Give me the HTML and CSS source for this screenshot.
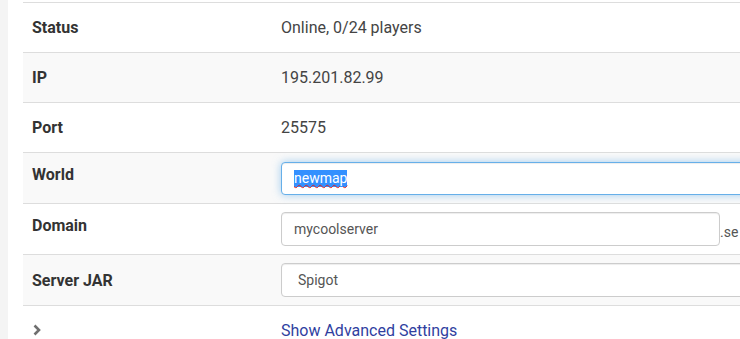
FILE: index.html
```html
<!DOCTYPE html>
<html>
<head>
<meta charset="utf-8">
<link rel="stylesheet" href="styles.css">
</head>
<body>
<div class="page">
  <div class="sidebar"></div>
  <div class="content">
    <div class="table">
      <div class="row plain">
        <div class="label">Status</div>
        <div class="value">Online, 0/24 players</div>
      </div>
      <div class="row plain striped">
        <div class="label">IP</div>
        <div class="value">195.201.82.99</div>
      </div>
      <div class="row plain">
        <div class="label">Port</div>
        <div class="value">25575</div>
      </div>
      <div class="row field striped">
        <div class="label top">World</div>
        <div class="value">
          <div class="input focused wide"><span class="sel">newmap</span></div>
        </div>
      </div>
      <div class="row field">
        <div class="label top">Domain</div>
        <div class="value">
          <div class="input domain">mycoolserver</div><span class="suffix">.se</span>
        </div>
      </div>
      <div class="row field striped">
        <div class="label">Server JAR</div>
        <div class="value">
          <div class="input select wide">Spigot</div>
        </div>
      </div>
      <div class="row advanced">
        <div class="label">
          <svg class="chev" width="10" height="12" viewBox="0 0 10 12"><polyline points="2.5,1.5 7,6 2.5,10.5" fill="none" stroke="#6f6f6f" stroke-width="2.6"/></svg>
        </div>
        <div class="value"><a class="link" href="#">Show Advanced Settings</a></div>
      </div>
    </div>
  </div>
</div>
</body>
</html>
```
FILE: styles.css
```css
html, body {
  margin: 0;
  padding: 0;
  background: #fff;
  overflow: hidden;
}
body {
  font-family: Roboto, "Liberation Sans", sans-serif;
  font-size: 16px;
  color: #333;
  width: 740px;
  height: 339px;
}
.page {
  display: flex;
  height: 339px;
}
.sidebar {
  width: 8px;
  flex: none;
  background: #f4f4f4;
}
.content {
  flex: none;
  padding: 2px 0 0 15px;
  width: 800px;
}
.table {
  width: 800px;
  border-top: 1px solid #ddd;
}
.row {
  display: flex;
  align-items: center;
  border-bottom: 1px solid #ddd;
  box-sizing: border-box;
}
.row.plain { height: 50px; }
.row.field { height: 51px; }
.row.striped { background: #f9f9f9; }
.row.advanced { border-bottom: none; height: 46px; padding-top: 2px; }
.label {
  width: 249px;
  padding-left: 9px;
  box-sizing: border-box;
  font-weight: bold;
  color: #333;
  flex: none;
}
.label.top {
  align-self: flex-start;
  padding-top: 12px;
}
.value {
  padding-left: 9px;
  color: #444;
  display: flex;
  align-items: center;
  flex: 1;
  white-space: nowrap;
}
.input {
  height: 34px;
  box-sizing: border-box;
  border: 1px solid #ccc;
  border-radius: 4px;
  background: #fff;
  padding: 0 12px;
  display: flex;
  align-items: center;
  color: #555;
  font-size: 14px;
  box-shadow: inset 0 1px 1px rgba(0,0,0,.075);
}
.input.wide { width: 520px; }
.input.domain { width: 439px; }
.input.focused {
  border-color: #66afe9;
  box-shadow: inset 0 1px 1px rgba(0,0,0,.075), 0 0 8px rgba(102,175,233,.6);
  height: 33px;
}
.input.select { padding-left: 16px; }
.sel {
  background: #3390ff;
  color: #fff;
  line-height: 17px;
  text-decoration: underline wavy #e02020;
  text-decoration-thickness: 1px;
  text-underline-offset: 1px;
}
.suffix {
  color: #555;
  font-size: 14px;
  align-self: flex-end;
  padding-bottom: 6px;
}
.chev { display: block; }
.link {
  color: #303f9f;
  text-decoration: none;
}
```
